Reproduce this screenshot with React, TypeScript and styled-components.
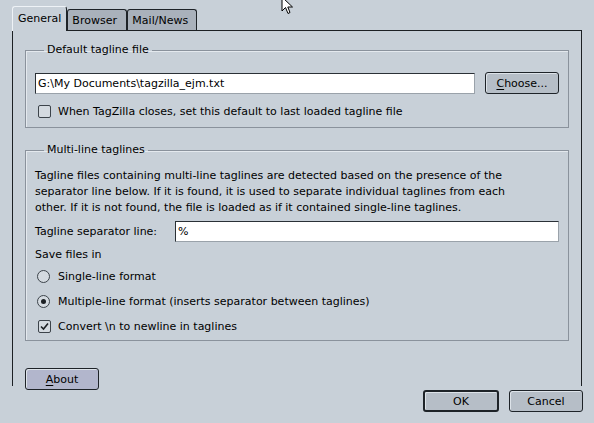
import React from "react";
import styled, { createGlobalStyle } from "styled-components";

const GlobalStyle = createGlobalStyle`
	html, body {
		margin: 0;
		padding: 0;
		background: #c8d0d8;
	}
	body {
		font-family: "DejaVu Sans", Verdana, sans-serif;
		font-size: 11px;
		color: #000;
	}
`;

const Window = styled.div`
	position: relative;
	width: 594px;
	height: 423px;
	box-sizing: border-box;
	padding: 6px 12px 0 12px;
	display: flex;
	flex-direction: column;
	overflow: hidden;
`;

const TabBar = styled.div`
	display: flex;
	align-items: flex-end;
	height: 24px;
`;

const Tab = styled.div<{ selected?: boolean }>`
	box-sizing: border-box;
	height: ${props => (props.selected ? "25px" : "21px")};
	margin-bottom: ${props => (props.selected ? "-1px" : "0")};
	position: relative;
	z-index: ${props => (props.selected ? 1 : 0)};
	padding: 0 ${props => (props.selected ? "5px" : "4px")};
	display: flex;
	align-items: center;
	padding-bottom: ${props => (props.selected ? "2px" : "0")};
	background: ${props => (props.selected ? "#c8d0d8" : "#a9b1bb")};
	border: 1px solid #1e2328;
	border-left-color: ${props => (props.selected ? "#eef2f6" : "#1e2328")};
	border-top-color: ${props => (props.selected ? "#eef2f6" : "#1e2328")};
	border-bottom: none;
	border-radius: 3px 3px 0 0;
	white-space: nowrap;
`;

const Panel = styled.div`
	box-sizing: border-box;
	height: 356px;
	border: 1px solid #1c2024;
	border-bottom: none;
	padding: 12px 12px 0 12px;
	display: flex;
	flex-direction: column;
`;

const Group = styled.fieldset<{ gap?: number }>`
	margin: ${props => props.gap ?? 0}px 0 0 0;
	border: 1px solid #8a929c;
	box-shadow: inset 1px 1px 0 #e4e9ee;
	padding: 0 9px 9px 9px;
	min-width: 0;
`;

const Legend = styled.legend`
	margin-left: 9px;
	padding: 0 3px;
	line-height: 14px;
	font-size: 11px;
`;

const Row = styled.div<{ top?: number; height?: number }>`
	display: flex;
	align-items: center;
	margin-top: ${props => props.top ?? 0}px;
	height: ${props => (props.height ? `${props.height}px` : "auto")};
`;

const TextBox = styled.div`
	box-sizing: border-box;
	height: 21px;
	flex: 1;
	background: #fff;
	border: 1px solid #2a3036;
	border-right-color: #9aa2aa;
	border-bottom-color: #9aa2aa;
	padding: 0 2px;
	display: flex;
	align-items: center;
	white-space: nowrap;
`;

const Button = styled.div<{ width: number; isDefault?: boolean; tint?: string }>`
	box-sizing: border-box;
	width: ${props => props.width}px;
	height: 22px;
	display: flex;
	align-items: center;
	justify-content: center;
	border: ${props => (props.isDefault ? "2px" : "1px")} solid #1e2328;
	border-radius: 3px;
	background: ${props => props.tint ?? "#b6bec7"};
	box-shadow: inset 1px 1px 0 #dde3e9;
	flex-shrink: 0;
	u {
		text-decoration: underline;
		text-underline-offset: 2px;
	}
`;

const Paragraph = styled.div`
	line-height: 16px;
	margin-top: 11px;
	white-space: nowrap;
`;

const Label = styled.span<{ width?: number }>`
	white-space: nowrap;
	width: ${props => (props.width ? `${props.width}px` : "auto")};
	flex-shrink: 0;
`;

const Check = styled.span`
	box-sizing: border-box;
	width: 13px;
	height: 13px;
	margin: 0 7px 0 3px;
	border: 1px solid #3c434a;
	border-radius: 2px;
	background: #d4dae0;
	display: inline-flex;
	align-items: center;
	justify-content: center;
	flex-shrink: 0;
`;

const Radio = styled.span<{ on?: boolean }>`
	box-sizing: border-box;
	width: 13px;
	height: 13px;
	margin: 0 8px 0 2px;
	border: 1px solid #3c434a;
	border-radius: 50%;
	background: #d4dae0;
	display: inline-flex;
	align-items: center;
	justify-content: center;
	flex-shrink: 0;
	&::after {
		content: "";
		display: ${props => (props.on ? "block" : "none")};
		width: 5px;
		height: 5px;
		border-radius: 50%;
		background: #1c2024;
	}
`;

const Options = styled.div`
	margin-top: 3px;
`;

const OptionRow = styled.div`
	display: flex;
	align-items: center;
	height: 25px;
`;

const AboutRow = styled.div`
	display: flex;
	margin-top: 27px;
`;

const Footer = styled.div`
	display: flex;
	justify-content: flex-end;
	gap: 10px;
	margin-top: 4px;
	margin-right: -1px;
`;

const Cursor = styled.svg`
	position: absolute;
	left: 281px;
	top: -4px;
`;

function CheckMark() {
	return (
		<svg width="9" height="9" viewBox="0 0 9 9">
			<path d="M1 4.5 L3.5 7 L8 1.5" fill="none" stroke="#1c2024" strokeWidth="1.6" />
		</svg>
	);
}

export default function App() {
	return (
		<>
			<GlobalStyle />
			<Window>
				<TabBar>
					<Tab selected>General</Tab>
					<Tab style={{ width: 60 }}>Browser</Tab>
					<Tab style={{ width: 70 }}>Mail/News</Tab>
				</TabBar>
				<Panel>
					<Group>
						<Legend>Default tagline file</Legend>
						<Row top={15} height={22}>
							<TextBox>G:\My Documents\tagzilla_ejm.txt</TextBox>
							<Button width={74} style={{ marginLeft: 10 }}>
								<span>
									<u>C</u>hoose...
								</span>
							</Button>
						</Row>
						<Row top={10} height={14}>
							<Check />
							<Label>When TagZilla closes, set this default to last loaded tagline file</Label>
						</Row>
					</Group>
					<Group gap={15} style={{ paddingBottom: 1 }}>
						<Legend>Multi-line taglines</Legend>
						<Paragraph>
							Tagline files containing multi-line taglines are detected based on the presence of the
							<br />
							separator line below. If it is found, it is used to separate individual taglines from each
							<br />
							other. If it is not found, the file is loaded as if it contained single-line taglines.
						</Paragraph>
						<Row top={5} height={21}>
							<Label width={140}>Tagline separator line:</Label>
							<TextBox>%</TextBox>
						</Row>
						<Row top={5} height={14}>
							<Label>Save files in</Label>
						</Row>
						<Options>
							<OptionRow>
								<Radio />
								<Label>Single-line format</Label>
							</OptionRow>
							<OptionRow>
								<Radio on />
								<Label>Multiple-line format (inserts separator between taglines)</Label>
							</OptionRow>
							<OptionRow>
								<Check>
									<CheckMark />
								</Check>
								<Label>Convert \n to newline in taglines</Label>
							</OptionRow>
						</Options>
					</Group>
					<AboutRow>
						<Button width={74} tint="#b2b6cc">
							<span>
								<u>A</u>bout
							</span>
						</Button>
					</AboutRow>
				</Panel>
				<Footer>
					<Button width={76} isDefault>
						OK
					</Button>
					<Button width={74}>Cancel</Button>
				</Footer>
				<Cursor width="14" height="20" viewBox="0 0 14 20">
					<path d="M1 1 L1 15 L4.5 11.5 L7 17.5 L9 16.5 L6.8 11 L11.5 11 Z" fill="#fff" stroke="#000" strokeWidth="1" />
				</Cursor>
			</Window>
		</>
	);
}
